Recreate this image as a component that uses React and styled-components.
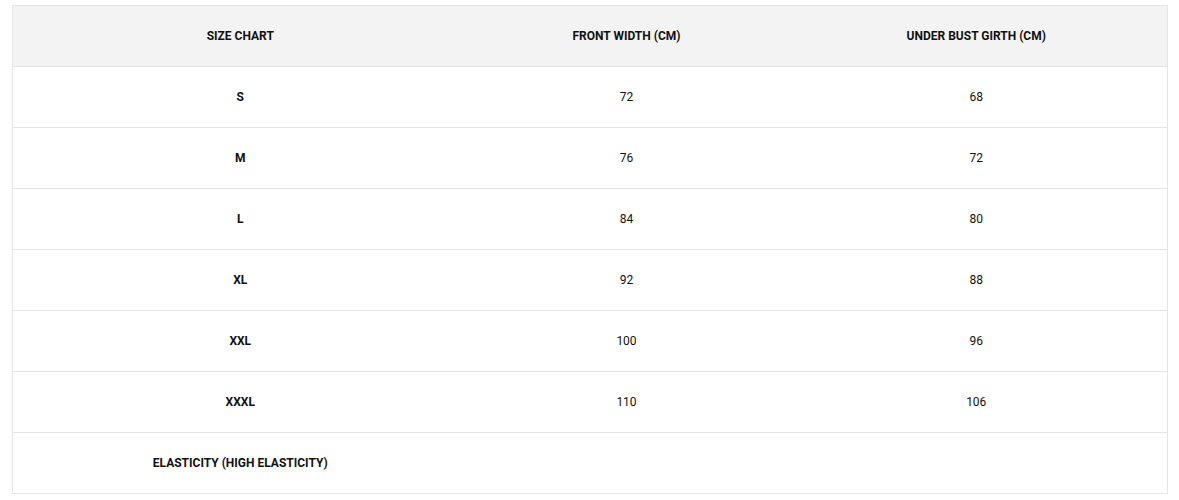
import React from 'react';
import styled, { createGlobalStyle } from 'styled-components';

const GlobalStyle = createGlobalStyle`
  body {
    margin: 0;
    background: #ffffff;
    font-family: Roboto, "Liberation Sans", sans-serif;
  }
`;

const rows = [
  { size: 'S', width: '72', bust: '68' },
  { size: 'M', width: '76', bust: '72' },
  { size: 'L', width: '84', bust: '80' },
  { size: 'XL', width: '92', bust: '88' },
  { size: 'XXL', width: '100', bust: '96' },
  { size: 'XXXL', width: '110', bust: '106' },
];

function App() {
  return (
    <Page>
      <GlobalStyle />
      <Chart>
        <colgroup>
          <col style={{ width: 455 }} />
          <col style={{ width: 318 }} />
          <col />
        </colgroup>
        <thead>
          <tr>
            <HeadCell>SIZE CHART</HeadCell>
            <HeadCell>FRONT WIDTH (CM)</HeadCell>
            <HeadCell>UNDER BUST GIRTH (CM)</HeadCell>
          </tr>
        </thead>
        <tbody>
          {rows.map(row => (
            <tr key={row.size}>
              <Cell bold>{row.size}</Cell>
              <Cell>{row.width}</Cell>
              <Cell>{row.bust}</Cell>
            </tr>
          ))}
          <tr>
            <Cell bold>ELASTICITY (HIGH ELASTICITY)</Cell>
            <Cell />
            <Cell />
          </tr>
        </tbody>
      </Chart>
    </Page>
  );
}

export default App;

const Page = styled.div`
  padding: 5px 12px;
`;

const Chart = styled.table`
  width: 1156px;
  border-collapse: collapse;
  table-layout: fixed;
  border: 1px solid #e3e5e6;
  color: #111111;
  font-size: 12px;
`;

const HeadCell = styled.th`
  height: 60px;
  padding: 0;
  background: #f3f3f3;
  font-weight: 700;
  text-align: center;
  border-bottom: 1px solid #e3e5e6;
`;

const Cell = styled.td`
  height: 60px;
  padding: 0;
  text-align: center;
  font-weight: ${props => (props.bold ? 700 : 400)};
  border-bottom: 1px solid #e3e5e6;
`;
